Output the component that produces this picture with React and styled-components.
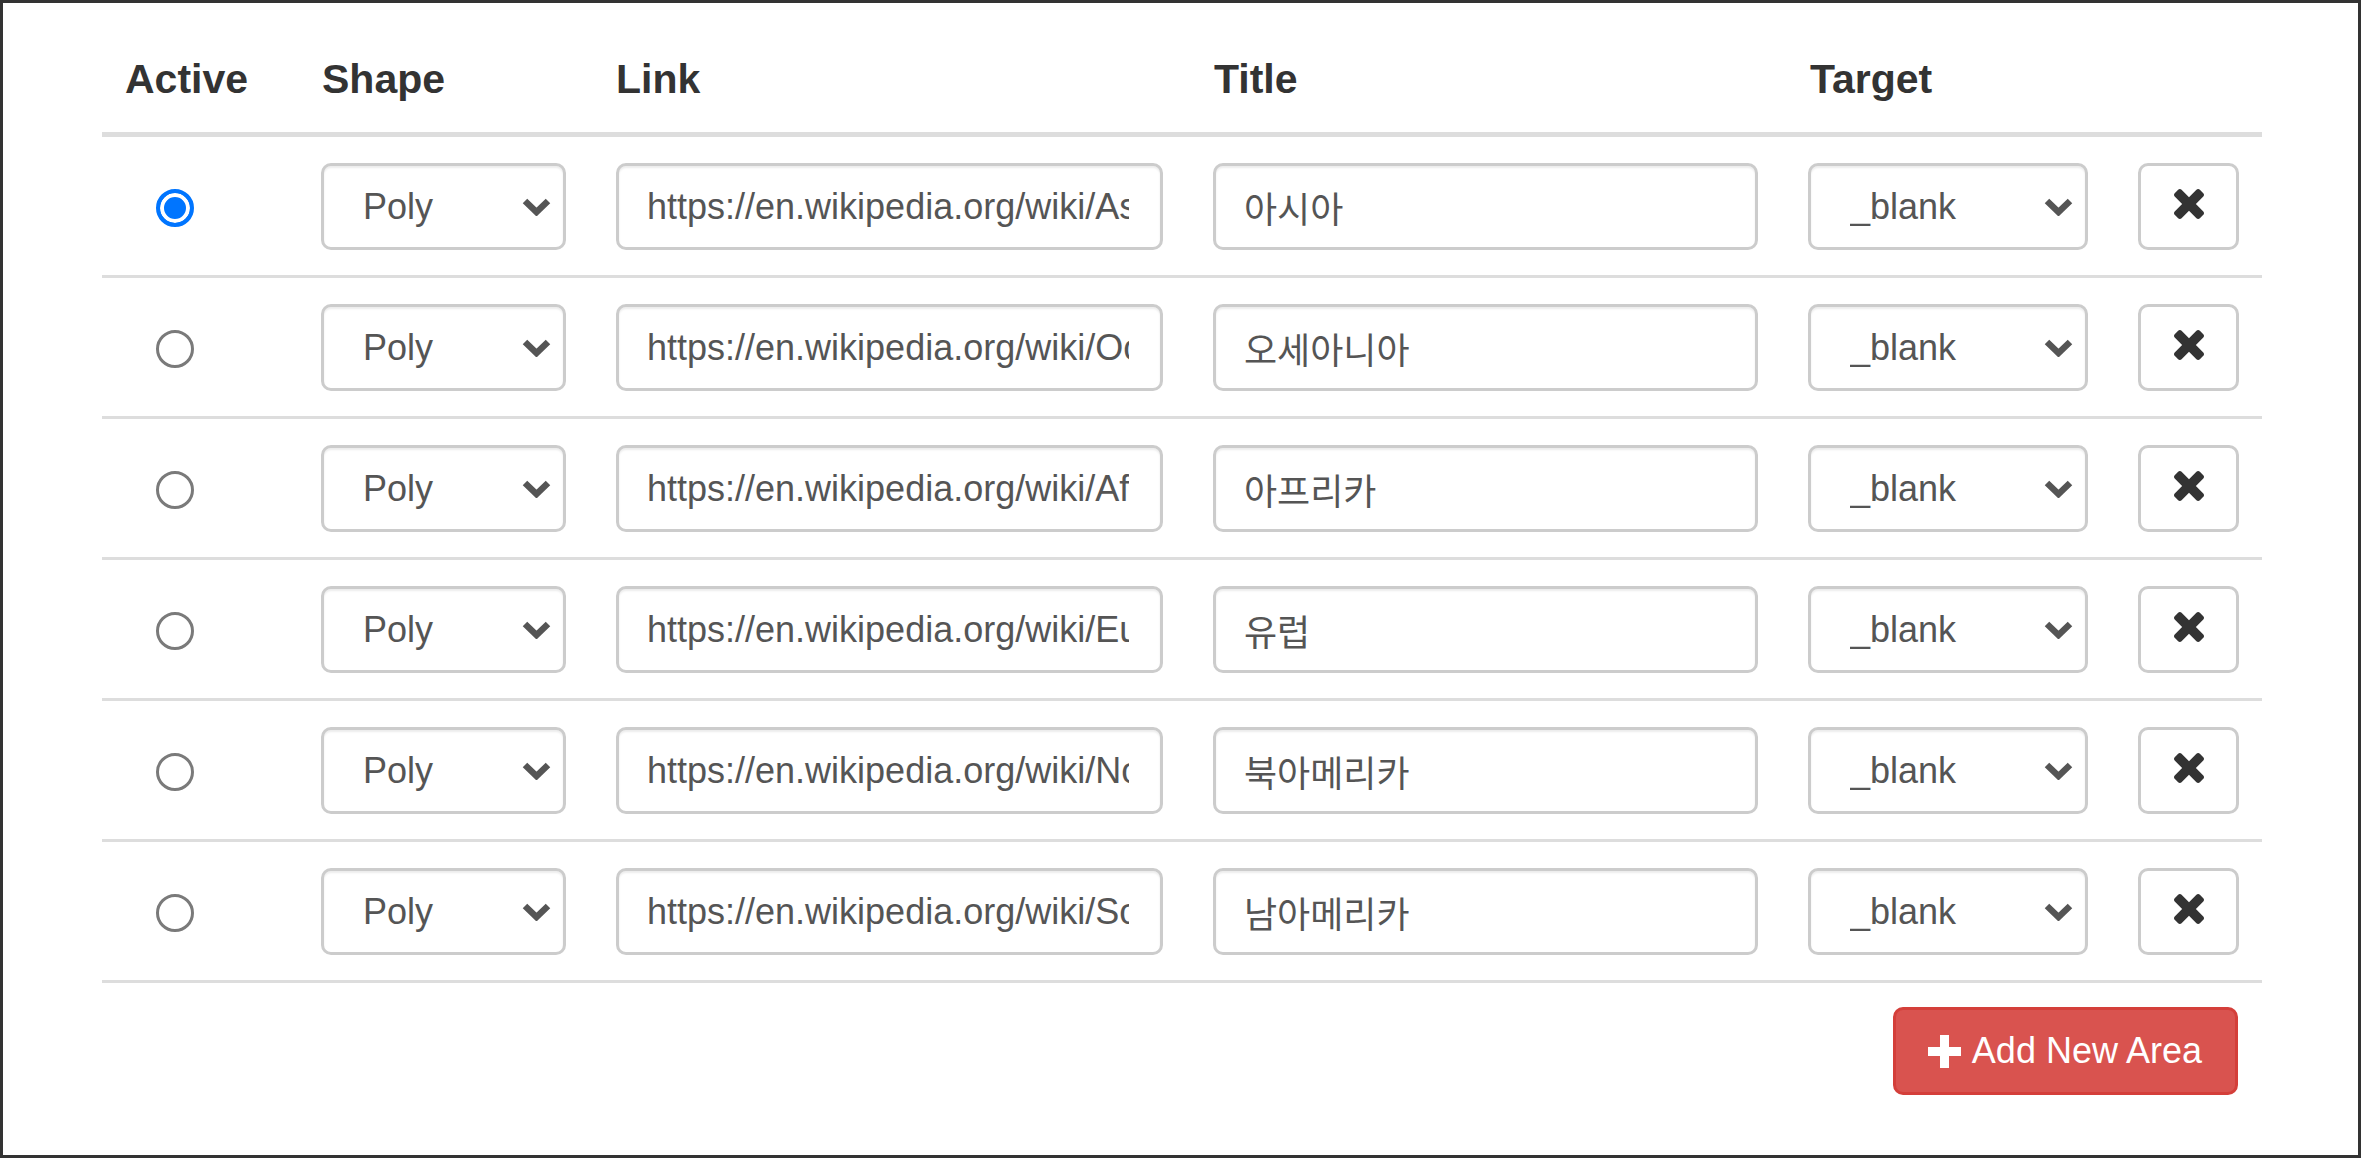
import { useState } from 'react';
import styled, { createGlobalStyle } from 'styled-components';

const columns = '145px 245px 547px 545px 280px 101px';
const fontStack = '"Liberation Sans", Arial, "Noto Sans CJK KR", sans-serif';

const areas = [
    { shape: 'poly', link: 'https://en.wikipedia.org/wiki/Asia', title: '아시아' },
    { shape: 'poly', link: 'https://en.wikipedia.org/wiki/Oceania', title: '오세아니아' },
    { shape: 'poly', link: 'https://en.wikipedia.org/wiki/Africa', title: '아프리카' },
    { shape: 'poly', link: 'https://en.wikipedia.org/wiki/Europe', title: '유럽' },
    { shape: 'poly', link: 'https://en.wikipedia.org/wiki/North_America', title: '북아메리카' },
    { shape: 'poly', link: 'https://en.wikipedia.org/wiki/South_America', title: '남아메리카' },
];

const GlobalStyle = createGlobalStyle`
    html, body {
        margin: 0;
        padding: 0;
        background: #fff;
    }
    body {
        font-family: ${fontStack};
        color: #333;
    }
    * {
        box-sizing: border-box;
    }
`;

const Frame = styled.div`
    width: 2361px;
    height: 1158px;
    border: 3px solid #333;
    background: #fff;
    padding: 47px 0 0 99px;
`;
const Table = styled.div`
    width: 2160px;
    display: flex;
    flex-direction: column;
`;
const HeadRow = styled.div`
    display: grid;
    grid-template-columns: ${columns};
    column-gap: 50px;
    padding: 0 24px 23px 24px;
    border-bottom: 5px solid #ddd;
`;
const HeadCell = styled.div`
    font-size: 41px;
    font-weight: bold;
    line-height: 59px;
    color: #333;
    margin-left: ${props => props.shift || 0}px;
`;
const Row = styled.div`
    display: grid;
    grid-template-columns: ${columns};
    column-gap: 50px;
    align-items: center;
    padding: 26px 24px 25px 24px;
    border-bottom: 3px solid #ddd;
`;
const RadioCell = styled.div`
    display: flex;
    align-items: center;
    height: 87px;
    padding: 2px 0 0 30px;
`;
const Radio = styled.input`
    appearance: none;
    -webkit-appearance: none;
    width: 38px;
    height: 38px;
    margin: 0;
    border-radius: 50%;
    border: 3px solid #7a7a7a;
    background: #fff;
    cursor: pointer;
    &:checked {
        border: 4px solid #0075ff;
        background: #0075ff;
        box-shadow: inset 0 0 0 4px #fff;
    }
`;
const Field = styled.input`
    width: 100%;
    height: 87px;
    padding: 0 31px 0 28px;
    border: 3px solid #ccc;
    border-radius: 10px;
    box-shadow: inset 0 2px 2px rgba(0, 0, 0, 0.075);
    font-family: ${fontStack};
    font-size: 36px;
    color: #555;
    background: #fff;
    outline: none;
`;
const SelectWrap = styled.div`
    position: relative;
    width: 100%;
    height: 87px;
`;
const Select = styled.select`
    appearance: none;
    -webkit-appearance: none;
    width: 100%;
    height: 87px;
    padding: 0 50px 0 39px;
    border: 3px solid #ccc;
    border-radius: 10px;
    box-shadow: inset 0 2px 2px rgba(0, 0, 0, 0.075);
    font-family: ${fontStack};
    font-size: 36px;
    color: #555;
    background: #fff;
    outline: none;
`;
const Chevron = styled.svg`
    position: absolute;
    right: 15px;
    top: 35px;
    width: 29px;
    height: 18px;
    pointer-events: none;
`;
const DeleteButton = styled.button`
    width: 101px;
    height: 87px;
    border: 3px solid #ccc;
    border-radius: 10px;
    background: #fff;
    display: flex;
    align-items: center;
    justify-content: center;
    padding: 0 0 6px 0;
    cursor: pointer;
`;
const Footer = styled.div`
    width: 2160px;
    display: flex;
    justify-content: flex-end;
    padding: 24px 24px 0 0;
`;
const AddButton = styled.button`
    height: 88px;
    display: flex;
    align-items: center;
    gap: 11px;
    padding: 0 33px 0 32px;
    border: 3px solid #d43f3a;
    border-radius: 10px;
    background: #d9534f;
    color: #fff;
    font-family: ${fontStack};
    font-size: 36px;
    cursor: pointer;
`;

function ChevronIcon() {
    return (
        <Chevron viewBox="0 0 29 18">
            <polyline points="3,3 14.5,14 26,3" fill="none" stroke="#555" strokeWidth="6.5" />
        </Chevron>
    );
}

function TimesIcon() {
    return (
        <svg width="30" height="30" viewBox="302 366 1188 1188">
            <path
                fill="#333"
                d="M1490 1322q0 40-28 68l-136 136q-28 28-68 28t-68-28l-294-294-294 294q-28 28-68 28t-68-28l-136-136q-28-28-28-68t28-68l294-294-294-294q-28-28-28-68t28-68l136-136q28-28 68-28t68 28l294 294 294-294q28-28 68-28t68 28l136 136q28 28 28 68t-28 68l-294 294 294 294q28 28 28 68z"
            />
        </svg>
    );
}

function PlusIcon() {
    return (
        <svg width="33" height="33" viewBox="0 0 33 33">
            <rect x="12" y="0" width="9" height="33" fill="#fff" />
            <rect x="0" y="12" width="33" height="9" fill="#fff" />
        </svg>
    );
}

function App() {
    const [active, setActive] = useState(0);

    return (
        <Frame>
            <GlobalStyle />
            <Table>
                <HeadRow>
                    <HeadCell shift={-1}>Active</HeadCell>
                    <HeadCell shift={1}>Shape</HeadCell>
                    <HeadCell>Link</HeadCell>
                    <HeadCell shift={1}>Title</HeadCell>
                    <HeadCell shift={2}>Target</HeadCell>
                    <HeadCell />
                </HeadRow>
                {areas.map((area, i) => (
                    <Row key={i}>
                        <RadioCell>
                            <Radio
                                type="radio"
                                name="active"
                                checked={active === i}
                                onChange={() => setActive(i)}
                            />
                        </RadioCell>
                        <SelectWrap>
                            <Select defaultValue={area.shape}>
                                <option value="rect">Rect</option>
                                <option value="circle">Circle</option>
                                <option value="poly">Poly</option>
                            </Select>
                            <ChevronIcon />
                        </SelectWrap>
                        <Field type="text" defaultValue={area.link} />
                        <Field type="text" defaultValue={area.title} />
                        <SelectWrap>
                            <Select defaultValue="_blank">
                                <option value="_blank">_blank</option>
                                <option value="_self">_self</option>
                                <option value="_parent">_parent</option>
                                <option value="_top">_top</option>
                            </Select>
                            <ChevronIcon />
                        </SelectWrap>
                        <DeleteButton type="button">
                            <TimesIcon />
                        </DeleteButton>
                    </Row>
                ))}
            </Table>
            <Footer>
                <AddButton type="button">
                    <PlusIcon />
                    Add New Area
                </AddButton>
            </Footer>
        </Frame>
    );
}

export default App;
